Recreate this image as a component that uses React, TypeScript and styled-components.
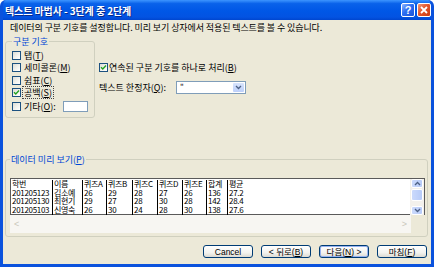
import { FC, ReactNode } from "react";
import styled, { createGlobalStyle } from "styled-components";

const GlobalStyle = createGlobalStyle`
  html, body {
    margin: 0;
    padding: 0;
    background: #ffffff;
  }
  body {
    font-family: "Liberation Sans", "Noto Sans CJK KR", sans-serif;
    font-size: 9px;
    color: #000;
  }
`;

const Window = styled.div`
  width: 434px;
  height: 267px;
  box-sizing: border-box;
  display: flex;
  flex-direction: column;
  background: #0a52dd;
  border: 3px solid #0a52dd;
  border-top: 0;
  border-radius: 6px 6px 0 0;
  overflow: hidden;
`;

const TitleBar = styled.div`
  height: 20px;
  margin: 0 -3px;
  padding: 0 3px 0 5px;
  display: flex;
  align-items: center;
  justify-content: space-between;
  background: linear-gradient(to bottom, #3d95ff 0%, #0a62ea 18%, #0057e6 55%, #0353e2 85%, #0046cf 100%);
`;

const Title = styled.span`
  color: #fff;
  font-weight: bold;
  font-size: 10px;
  font-family: "Noto Sans CJK KR", sans-serif;
  text-shadow: 1px 1px 0 #0a2a8a;
  letter-spacing: -0.1px;
`;

const Controls = styled.div`
  display: flex;
  gap: 2px;
`;

const CtrlButton = styled.div<{ $close?: boolean }>`
  width: 14px;
  height: 14px;
  box-sizing: border-box;
  border: 1px solid #fff;
  border-radius: 2px;
  display: flex;
  align-items: center;
  justify-content: center;
  color: #fff;
  font-weight: bold;
  font-size: 11px;
  font-family: "Liberation Sans", sans-serif;
  background: ${(p) =>
    p.$close
      ? "linear-gradient(135deg, #f29a7c 0%, #e2552b 45%, #c83b12 100%)"
      : "linear-gradient(135deg, #8fb6ff 0%, #2d6ef2 45%, #1a52d8 100%)"};
`;

const Body = styled.div`
  flex: 1;
  background: #ece9d8;
  display: flex;
  flex-direction: column;
  padding: 0 3px 0 2px;
`;

const Description = styled.div`
  height: 15px;
  line-height: 15px;
  padding-left: 5px;
  font-family: "Noto Sans CJK KR", sans-serif;
  letter-spacing: -0.1px;
`;

const TopRow = styled.div`
  display: flex;
  margin-top: 1px;
`;

const Group = styled.fieldset<{ $w?: number; $h: number }>`
  margin: 0;
  box-sizing: border-box;
  width: ${(p) => (p.$w ? `${p.$w}px` : "auto")};
  height: ${(p) => p.$h}px;
  border: 1px solid #d0d0bf;
  border-radius: 3px;
  padding: 0 3px 1px 6px;
  min-width: 0;
`;

const Legend = styled.legend`
  color: #0046d5;
  padding: 0 1px;
  margin-left: 0;
  line-height: 11px;
  font-family: "Noto Sans CJK KR", sans-serif;
`;

const OptionList = styled.div`
  display: flex;
  flex-direction: column;
  padding-top: 2px;
`;

const OptionRow = styled.label<{ $h?: number }>`
  display: flex;
  align-items: center;
  gap: 2px;
  height: ${(p) => p.$h ?? 12.5}px;
  white-space: nowrap;
  font-family: "Noto Sans CJK KR", sans-serif;
`;

const Box = styled.span`
  width: 9px;
  height: 9px;
  box-sizing: border-box;
  border: 1px solid #1c5180;
  background: linear-gradient(135deg, #dcdcd5 0%, #f4f4f0 60%, #ffffff 100%);
  display: inline-flex;
  align-items: center;
  justify-content: center;
  flex: none;
`;

const LabelText = styled.span<{ $focus?: boolean }>`
  padding: 0 1px;
  outline: ${(p) => (p.$focus ? "1px dotted #444" : "none")};
  line-height: 11px;
`;

const SmallInput = styled.div`
  width: 25px;
  height: 11px;
  box-sizing: border-box;
  border: 1px solid #7f9db9;
  background: #fff;
  margin-left: 4px;
`;

const RightCol = styled.div`
  margin-left: 4px;
  padding-top: 25px;
  display: flex;
  flex-direction: column;
  gap: 7px;
`;

const FieldRow = styled.div`
  display: flex;
  align-items: center;
  height: 13px;
  font-family: "Noto Sans CJK KR", sans-serif;
  white-space: nowrap;
`;

const FieldLabel = styled.span`
  width: 77px;
`;

const Select = styled.div`
  width: 70px;
  height: 13px;
  box-sizing: border-box;
  border: 1px solid #7f9db9;
  background: #fff;
  display: flex;
  justify-content: space-between;
  align-items: stretch;
  font-size: 8px;
  line-height: 10px;
  padding-left: 3px;
`;

const DropButton = styled.span`
  width: 11px;
  margin: 1px;
  border-radius: 1px;
  background: linear-gradient(to bottom, #d8e4fc 0%, #bccffa 100%);
  display: flex;
  align-items: center;
  justify-content: center;
`;

const PreviewGroup = styled(Group)`
  margin-top: 36px;
  padding: 0 2px 1px 4px;
  display: flex;
  flex-direction: column;
`;

const ListArea = styled.div`
  margin-top: 13px;
  display: grid;
  grid-template-columns: 1fr 14px;
  grid-template-rows: 37px 18px;
`;

const ListBox = styled.div`
  grid-column: 1 / 3;
  grid-row: 1;
  display: grid;
  grid-template-columns: 1fr 14px;
  border: 1px solid #5a5a5a;
  background: #fff;
`;

const Table = styled.div`
  display: grid;
  grid-template-columns: 41px 30px 24px 26px 25px 25px 24px 21px 1fr;
  grid-auto-rows: 8.7px;
  font-family: "Noto Sans CJK KR", sans-serif;
  font-size: 8px;
  line-height: 8.7px;
  letter-spacing: -0.3px;
  align-content: start;
  padding-top: 1px;
`;

const Cell = styled.div<{ $first?: boolean }>`
  border-left: ${(p) => (p.$first ? "none" : "1px solid #000")};
  padding-left: 1px;
  white-space: nowrap;
`;

const VScroll = styled.div`
  background: #f3f1ec;
  display: flex;
  flex-direction: column;
  gap: 1px;
  padding: 0 1px;
`;

const ScrollBtn = styled.div<{ $h: number; $end?: boolean }>`
  height: ${(p) => p.$h}px;
  margin-top: ${(p) => (p.$end ? "auto" : "0")};
  box-sizing: border-box;
  border: 1px solid #fff;
  border-radius: 2px;
  background: linear-gradient(to right, #cbdafc 0%, #b7cbf8 100%);
  display: flex;
  align-items: center;
  justify-content: center;
`;

const HScroll = styled.div`
  grid-column: 1;
  grid-row: 2;
  background: #f7f6f2;
  display: flex;
  justify-content: space-between;
  align-items: center;
  padding: 0 4px;
  color: #c9c7ba;
  font-size: 9px;
`;

const Corner = styled.div`
  grid-column: 2;
  grid-row: 2;
  background: #ece9d8;
`;

const ButtonRow = styled.div`
  margin-top: 8px;
  display: flex;
  justify-content: flex-end;
  gap: 8px;
  padding-right: 1px;
`;

const Button = styled.div<{ $default?: boolean }>`
  width: 50px;
  height: 13px;
  box-sizing: border-box;
  border: 1px solid #003c74;
  border-radius: 3px;
  background: linear-gradient(to bottom, #ffffff 0%, #f3f3ef 60%, #dcdad2 100%);
  box-shadow: ${(p) => (p.$default ? "inset 0 0 0 1px #97b2f0" : "none")};
  display: flex;
  align-items: center;
  justify-content: center;
  font-family: "Liberation Sans", "Noto Sans CJK KR", sans-serif;
  font-size: 8.5px;
  line-height: 10px;
  white-space: nowrap;
`;

const Check: FC<{ checked?: boolean }> = ({ checked }) => (
  <Box>
    {checked && (
      <svg width="7" height="7" viewBox="0 0 7 7">
        <path d="M1 3.2 L2.8 5 L6 1.6" stroke="#21a121" strokeWidth="1.4" fill="none" />
      </svg>
    )}
  </Box>
);

const Arrow: FC<{ dir: "up" | "down" }> = ({ dir }) => (
  <svg width="7" height="5" viewBox="0 0 7 5">
    <path
      d={dir === "up" ? "M1 4 L3.5 1.5 L6 4" : "M1 1 L3.5 3.5 L6 1"}
      stroke="#4d6185"
      strokeWidth="1.3"
      fill="none"
    />
  </svg>
);

const Option: FC<{ label: ReactNode; checked?: boolean; focus?: boolean; h?: number; children?: ReactNode }> = ({
  label,
  checked,
  focus,
  h,
  children,
}) => (
  <OptionRow $h={h}>
    <Check checked={checked} />
    <LabelText $focus={focus}>{label}</LabelText>
    {children}
  </OptionRow>
);

const rows = [
  ["학번", "이름", "퀴즈A", "퀴즈B", "퀴즈C", "퀴즈D", "퀴즈E", "합계", "평균"],
  ["201205123", "김소예", "26", "29", "28", "27", "26", "136", "27.2"],
  ["201205130", "최현기", "29", "27", "28", "30", "28", "142", "28.4"],
  ["201205103", "신영숙", "26", "30", "24", "28", "30", "138", "27.6"],
];

const App: FC = () => {
  return (
    <>
      <GlobalStyle />
      <Window>
        <TitleBar>
          <Title>텍스트 마법사 - 3단계 중 2단계</Title>
          <Controls>
            <CtrlButton>?</CtrlButton>
            <CtrlButton $close>
              <svg width="8" height="8" viewBox="0 0 8 8">
                <path d="M1 1 L7 7 M7 1 L1 7" stroke="#fff" strokeWidth="1.8" />
              </svg>
            </CtrlButton>
          </Controls>
        </TitleBar>
        <Body>
          <Description>
            데이터의 구분 기호를 설정합니다. 미리 보기 상자에서 적용된 텍스트를 볼 수 있습니다.
          </Description>
          <TopRow>
            <Group $w={90} $h={82}>
              <Legend>구분 기호</Legend>
              <OptionList>
                <Option label={<>탭(<u>T</u>)</>} />
                <Option label={<>세미콜론(<u>M</u>)</>} />
                <Option label={<>쉼표(<u>C</u>)</>} />
                <Option label={<>공백(<u>S</u>)</>} checked focus />
                <Option label={<>기타(<u>O</u>):</>} h={14}>
                  <SmallInput />
                </Option>
              </OptionList>
            </Group>
            <RightCol>
              <FieldRow>
                <Check checked />
                <LabelText>
                  연속된 구분 기호를 하나로 처리(<u>B</u>)
                </LabelText>
              </FieldRow>
              <FieldRow>
                <FieldLabel>
                  텍스트 한정자(<u>Q</u>):
                </FieldLabel>
                <Select>
                  <span>"</span>
                  <DropButton>
                    <Arrow dir="down" />
                  </DropButton>
                </Select>
              </FieldRow>
            </RightCol>
          </TopRow>
          <PreviewGroup $h={83}>
            <Legend>
              데이터 미리 보기(<u>P</u>)
            </Legend>
            <ListArea>
              <ListBox>
                <Table>
                  {rows.map((r, i) =>
                    r.map((c, j) => (
                      <Cell key={`${i}-${j}`} $first={j === 0}>
                        {c}
                      </Cell>
                    ))
                  )}
                </Table>
                <VScroll>
                  <ScrollBtn $h={9}>
                    <Arrow dir="up" />
                  </ScrollBtn>
                  <ScrollBtn $h={12} />
                  <ScrollBtn $h={9} $end>
                    <Arrow dir="down" />
                  </ScrollBtn>
                </VScroll>
              </ListBox>
              <HScroll>
                <span>&lt;</span>
                <span>&gt;</span>
              </HScroll>
              <Corner />
            </ListArea>
          </PreviewGroup>
          <ButtonRow>
            <Button>Cancel</Button>
            <Button>
              &lt; 뒤로(<u>B</u>)
            </Button>
            <Button $default>
              다음(<u>N</u>) &gt;
            </Button>
            <Button>
              마침(<u>F</u>)
            </Button>
          </ButtonRow>
        </Body>
      </Window>
    </>
  );
};

export default App;
